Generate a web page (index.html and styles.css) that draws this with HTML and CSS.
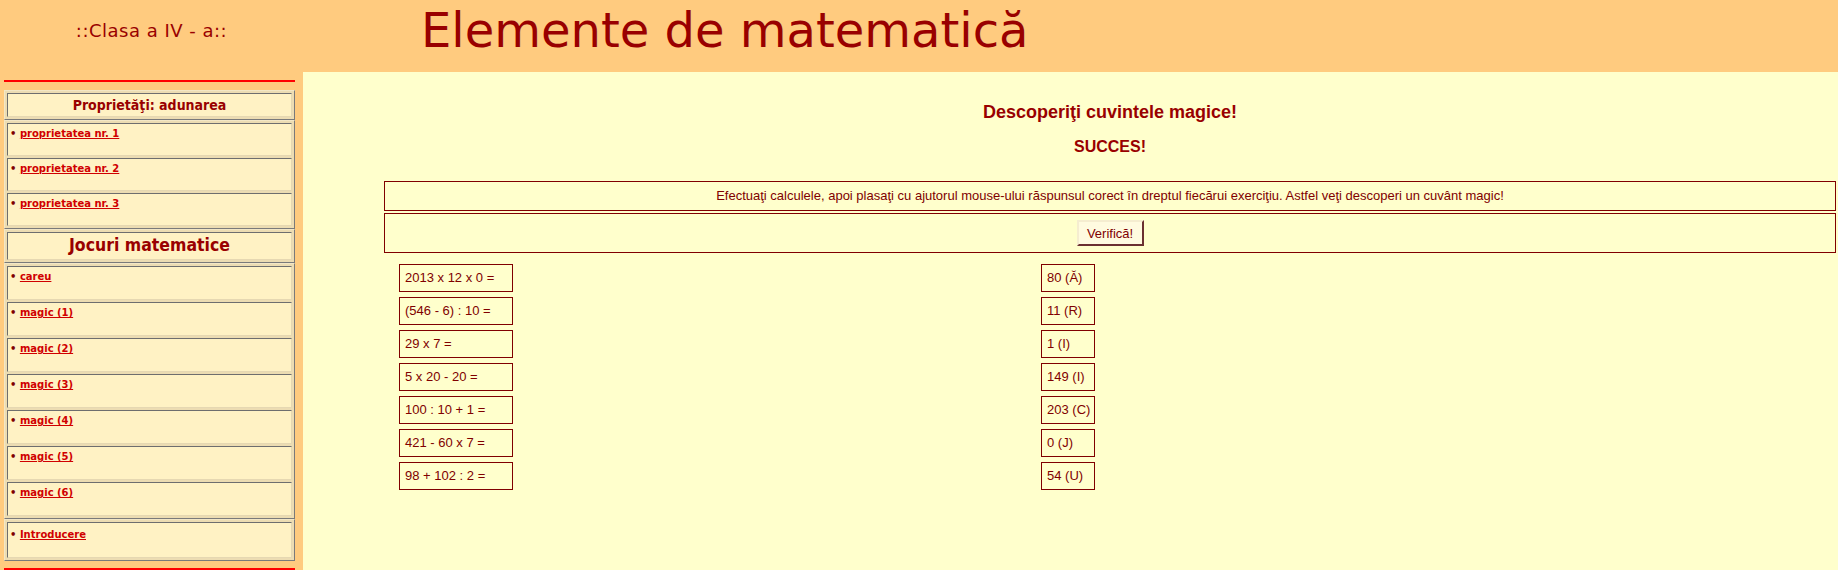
FILE: index.html
```html
<!DOCTYPE html>
<html lang="ro">
<head>
  <meta charset="UTF-8" />
  <title>Elemente de matematică</title>
  <link rel="stylesheet" href="styles.css">
</head>
<body>

  <header class="top">
    <div class="clasa">::Clasa a IV - a::</div>
    <div class="titlu">Elemente de matematică</div>
  </header>

  <div class="pagina">
    <aside class="meniu">
      <div class="linie"></div>

      <div class="grup">
        <div class="cel cap">Proprietăţi: adunarea</div>
      </div>
      <div class="grup">
        <div class="cel link">&bull; <a href="#">proprietatea nr. 1</a></div>
        <div class="cel link">&bull; <a href="#">proprietatea nr. 2</a></div>
        <div class="cel link">&bull; <a href="#">proprietatea nr. 3</a></div>
      </div>
      <div class="grup">
        <div class="cel cap mare">Jocuri matematice</div>
      </div>
      <div class="grup">
        <div class="cel link joc">&bull; <a href="#">careu</a></div>
        <div class="cel link joc">&bull; <a href="#">magic (1)</a></div>
        <div class="cel link joc">&bull; <a href="#">magic (2)</a></div>
        <div class="cel link joc">&bull; <a href="#">magic (3)</a></div>
        <div class="cel link joc">&bull; <a href="#">magic (4)</a></div>
        <div class="cel link joc">&bull; <a href="#">magic (5)</a></div>
        <div class="cel link joc">&bull; <a href="#">magic (6)</a></div>
      </div>
      <div class="grup">
        <div class="cel link intro">&bull; <a href="#">Introducere</a></div>
      </div>

      <div class="linie jos"></div>
    </aside>

    <main class="continut">
      <h1>Descoperiţi cuvintele magice!</h1>
      <h2>SUCCES!</h2>

      <div class="caseta">Efectuaţi calculele, apoi plasaţi cu ajutorul mouse-ului răspunsul corect în dreptul fiecărui exerciţiu. Astfel veţi descoperi un cuvânt magic!</div>
      <div class="caseta buton-rand">
        <button class="verifica">Verifică!</button>
      </div>

      <div class="exercitii">
        <div class="coloana stanga">
          <div class="bloc">2013 x 12 x 0 =</div>
          <div class="bloc">(546 - 6) : 10 =</div>
          <div class="bloc">29 x 7 =</div>
          <div class="bloc">5 x 20 - 20 =</div>
          <div class="bloc">100 : 10 + 1 =</div>
          <div class="bloc">421 - 60 x 7 =</div>
          <div class="bloc">98 + 102 : 2 =</div>
        </div>
        <div class="coloana dreapta">
          <div class="bloc">80 (Ă)</div>
          <div class="bloc">11 (R)</div>
          <div class="bloc">1 (I)</div>
          <div class="bloc">149 (I)</div>
          <div class="bloc">203 (C)</div>
          <div class="bloc">0 (J)</div>
          <div class="bloc">54 (U)</div>
        </div>
      </div>
    </main>
  </div>

</body>
</html>
```

FILE: styles.css
```css
:root {
  --portocaliu: #ffcb7f;
  --crem: #ffffcc;
  --celula: #fff2c4;
  --visiniu: #800000;
  --rosu: #990000;
}

* {
  box-sizing: border-box;
  margin: 0;
  padding: 0;
}

body {
  background-color: var(--portocaliu);
  font-family: 'Liberation Sans', Arial, sans-serif;
  color: var(--visiniu);
}

/* antet */
.top {
  height: 72px;
  display: flex;
  align-items: flex-start;
}

.clasa {
  width: 303px;
  padding-top: 20px;
  text-align: center;
  font-family: 'DejaVu Sans', Verdana, sans-serif;
  font-size: 18px;
  line-height: 21px;
  letter-spacing: 0.5px;
  color: var(--rosu);
}

.titlu {
  margin-left: 118px;
  padding-top: 2px;
  font-family: 'DejaVu Sans', Verdana, sans-serif;
  font-size: 48px;
  line-height: 56px;
  color: var(--rosu);
}

.pagina {
  display: flex;
  min-height: calc(100vh - 72px);
}

/* meniu stanga */
.meniu {
  width: 303px;
  flex-shrink: 0;
  padding: 8px 8px 0 4px;
}

.linie {
  height: 2px;
  background-color: #ff0000;
  margin-bottom: 8px;
}

.linie.jos {
  margin-top: 7px;
  margin-bottom: 0;
}

.grup {
  display: flex;
  flex-direction: column;
  gap: 2px;
  padding: 2px;
  background-color: #ecdcb2;
  border: 1px solid;
  border-color: #f3e7c6 #7a7a7a #7a7a7a #f3e7c6;
}

.cel {
  background-color: var(--celula);
  border: 1px solid;
  border-color: #6e6e6e #e6d8b2 #e6d8b2 #6e6e6e;
}

.cap {
  height: 24px;
  text-align: center;
  font-family: 'DejaVu Sans Condensed', 'DejaVu Sans', sans-serif;
  font-weight: bold;
  font-size: 14px;
  line-height: 22px;
  color: var(--rosu);
}

.cap.mare {
  height: 28px;
  font-size: 17.5px;
  line-height: 25px;
}

.link {
  height: 33px;
  padding: 3px 2px 2px;
  font-family: 'DejaVu Sans', Verdana, sans-serif;
  font-weight: bold;
  font-size: 10px;
  line-height: 14px;
  color: var(--visiniu);
}

.link.joc {
  height: 34px;
}

.link.intro {
  height: 36px;
  padding-top: 5px;
}

.link a {
  color: #d00000;
  text-decoration: underline;
}

/* continut */
.continut {
  flex: 1;
  background-color: var(--crem);
  padding: 30px 2px 20px 81px;
}

h1 {
  text-align: center;
  font-size: 18px;
  line-height: 21px;
  color: var(--rosu);
}

h2 {
  text-align: center;
  font-size: 16px;
  line-height: 18px;
  margin-top: 15px;
  margin-bottom: 25px;
  color: var(--rosu);
}

.caseta {
  border: 1px solid var(--visiniu);
  height: 30px;
  font-size: 13px;
  line-height: 28px;
  text-align: center;
  margin-bottom: 2px;
}

.buton-rand {
  height: 40px;
  display: flex;
  justify-content: center;
  align-items: center;
  margin-bottom: 11px;
}

.verifica {
  width: 67px;
  height: 26px;
  font-family: 'Liberation Sans', Arial, sans-serif;
  font-size: 13px;
  color: var(--visiniu);
  background-color: #fffbe0;
  border: 2px solid;
  border-color: #f5edd0 #6b3030 #6b3030 #f5edd0;
  cursor: pointer;
}

.exercitii {
  display: flex;
  padding-left: 15px;
}

.coloana {
  display: flex;
  flex-direction: column;
  gap: 5px;
}

.stanga {
  width: 114px;
  margin-right: 528px;
}

.dreapta {
  width: 54px;
}

.bloc {
  height: 28px;
  border: 1px solid var(--visiniu);
  padding: 5px 0 0 5px;
  font-size: 13px;
  line-height: 15px;
  white-space: nowrap;
}
```
